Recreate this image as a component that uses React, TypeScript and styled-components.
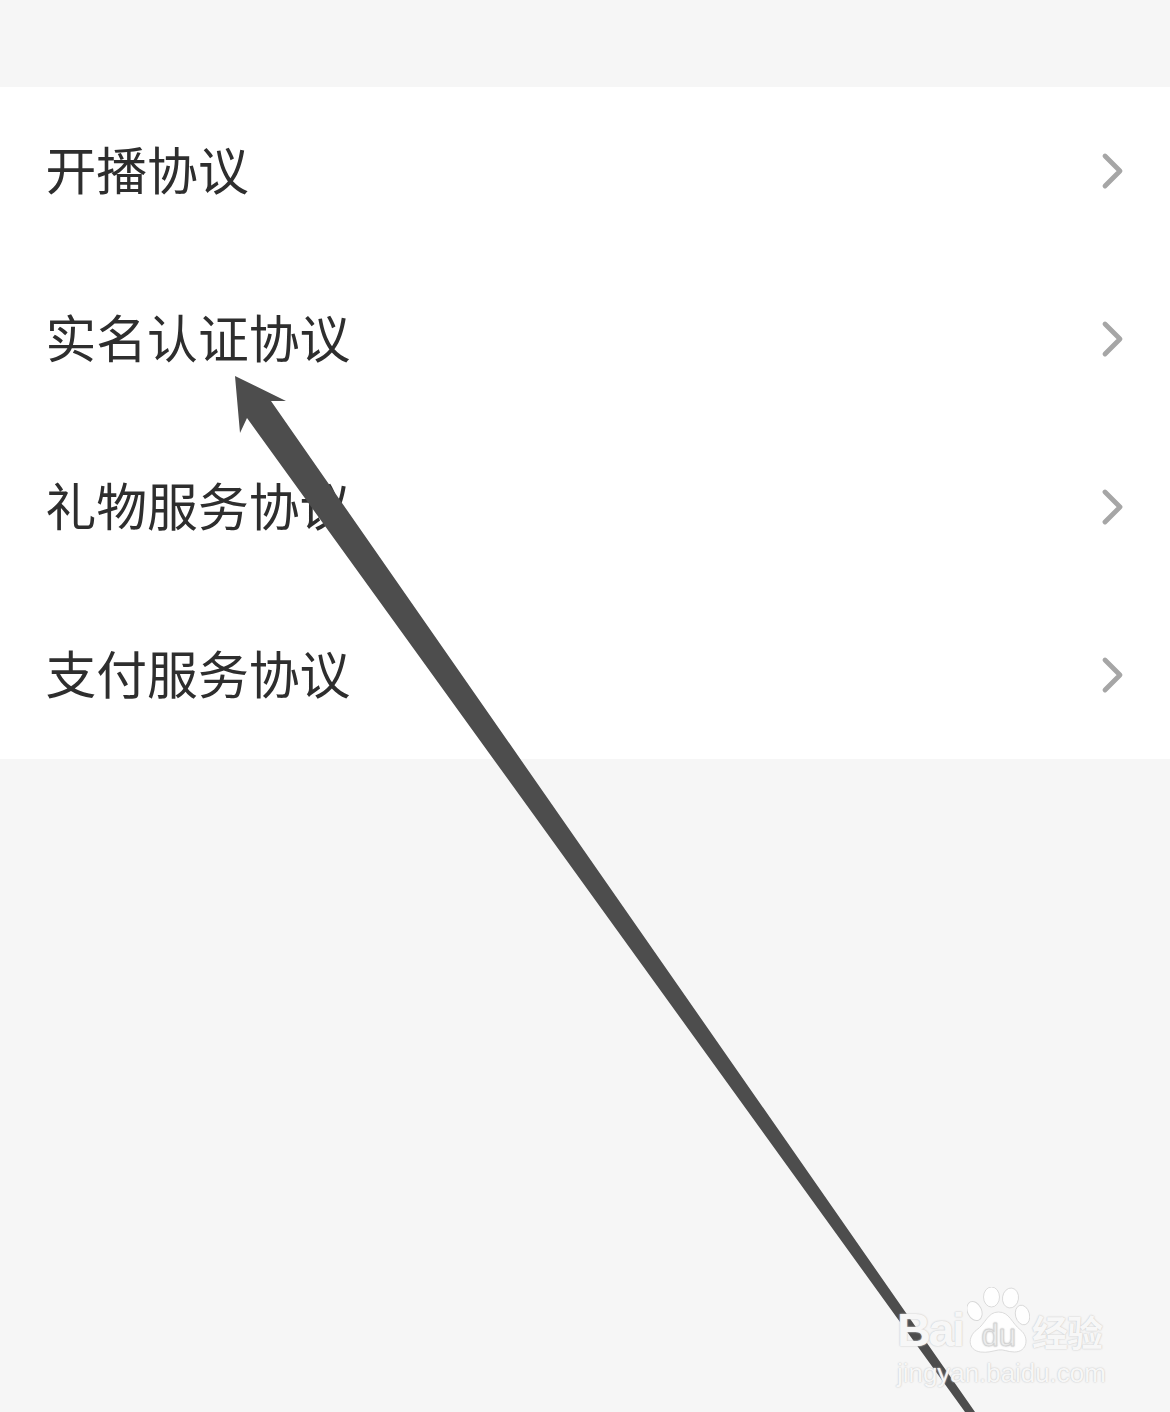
import React from "react";
import styled, { createGlobalStyle } from "styled-components";

const Global = createGlobalStyle`
  html, body { margin: 0; padding: 0; background: #f6f6f6; }
`;

const Page = styled.div`
  position: relative;
  width: 1170px;
  height: 1412px;
  overflow: hidden;
  background: #f6f6f6;
  padding-top: 87px;
  box-sizing: border-box;
  font-family: "Noto Sans CJK SC", "Liberation Sans", sans-serif;
`;

const List = styled.div`
  display: flex;
  flex-direction: column;
  background: #ffffff;
`;

const Row = styled.div`
  display: flex;
  align-items: center;
  justify-content: space-between;
  height: 168px;
  padding: 0 44px 0 45.5px;
`;

const Label = styled.span`
  font-size: 50.8px;
  line-height: 60px;
  padding-bottom: 6px;
  font-weight: 400;
  color: #2e2e2e;
`;

const Chevron = styled.svg`
  display: block;
  width: 26px;
  height: 38px;
  fill: none;
  stroke: #a6a6a6;
  stroke-width: 4.8;
  stroke-linecap: round;
  stroke-linejoin: round;
`;

const ArrowLayer = styled.svg`
  position: absolute;
  left: 0;
  top: 0;
  width: 1170px;
  height: 1412px;
`;

const Watermark = styled.div`
  position: absolute;
  left: 897px;
  top: 1287px;
  display: flex;
  flex-direction: column;
  gap: 5px;
  color: rgba(255, 255, 255, 0.85);
  font-family: "Liberation Sans", "Noto Sans CJK SC", sans-serif;
  text-shadow: 0 0 2px #cccccc, 0 0 1px #d0d0d0;
`;

const BrandRow = styled.div`
  display: flex;
  align-items: flex-end;
  height: 66px;
`;

const Bai = styled.span`
  width: 70px;
  font-weight: 700;
  font-size: 47px;
  line-height: 47px;
  letter-spacing: -2.5px;
  white-space: nowrap;
`;

const Paw = styled.svg`
  display: block;
  flex: none;
  width: 63px;
  height: 66px;
  fill: rgba(255, 255, 255, 0.88);
  stroke: #d8d8d8;
  stroke-width: 0.9;
`;

const DuText = styled.text`
  fill: #f2f2f2;
  stroke: #cfcfcf;
  stroke-width: 0.4;
  font-family: "Liberation Sans", sans-serif;
  font-size: 31px;
`;

const Jingyan = styled.span`
  font-family: "Noto Sans CJK SC", sans-serif;
  font-size: 36px;
  line-height: 44px;
  font-weight: 700;
  letter-spacing: -1px;
  margin-left: 2px;
  white-space: nowrap;
`;

const Domain = styled.span`
  font-size: 25.9px;
  line-height: 30px;
  white-space: nowrap;
`;

const items = ["开播协议", "实名认证协议", "礼物服务协议", "支付服务协议"];

export default function App() {
  return (
    <Page>
      <Global />
      <List>
        {items.map((t) => (
          <Row key={t}>
            <Label>{t}</Label>
            <Chevron viewBox="0 0 26 38">
              <path d="M5 4 L20 19 L5 34" />
            </Chevron>
          </Row>
        ))}
      </List>
      <ArrowLayer viewBox="0 0 1170 1412">
        <polygon
          points="235,376 286,401 271,401 975,1412 965,1412 247,418 240,433"
          fill="#4d4d4d"
        />
      </ArrowLayer>
      <Watermark>
        <BrandRow>
          <Bai>Bai</Bai>
          <Paw viewBox="0 0 62 66">
            <ellipse cx="7" cy="24" rx="7" ry="10" transform="rotate(-25 7 24)" />
            <ellipse cx="24" cy="10" rx="8" ry="10" />
            <ellipse cx="43" cy="11" rx="8" ry="10" transform="rotate(8 43 11)" />
            <ellipse cx="55" cy="28" rx="7" ry="10" transform="rotate(-15 55 28)" />
            <path d="M31 25 C42 25 44 36 53 43 C62 50 60 65 47 65 C40 65 36 62 31 63 C25 64 20 66 13 65 C0 63 0 50 9 43 C18 37 20 25 31 25 Z" />
            <DuText x="14" y="59">du</DuText>
          </Paw>
          <Jingyan>经验</Jingyan>
        </BrandRow>
        <Domain>jingyan.baidu.com</Domain>
      </Watermark>
    </Page>
  );
}
